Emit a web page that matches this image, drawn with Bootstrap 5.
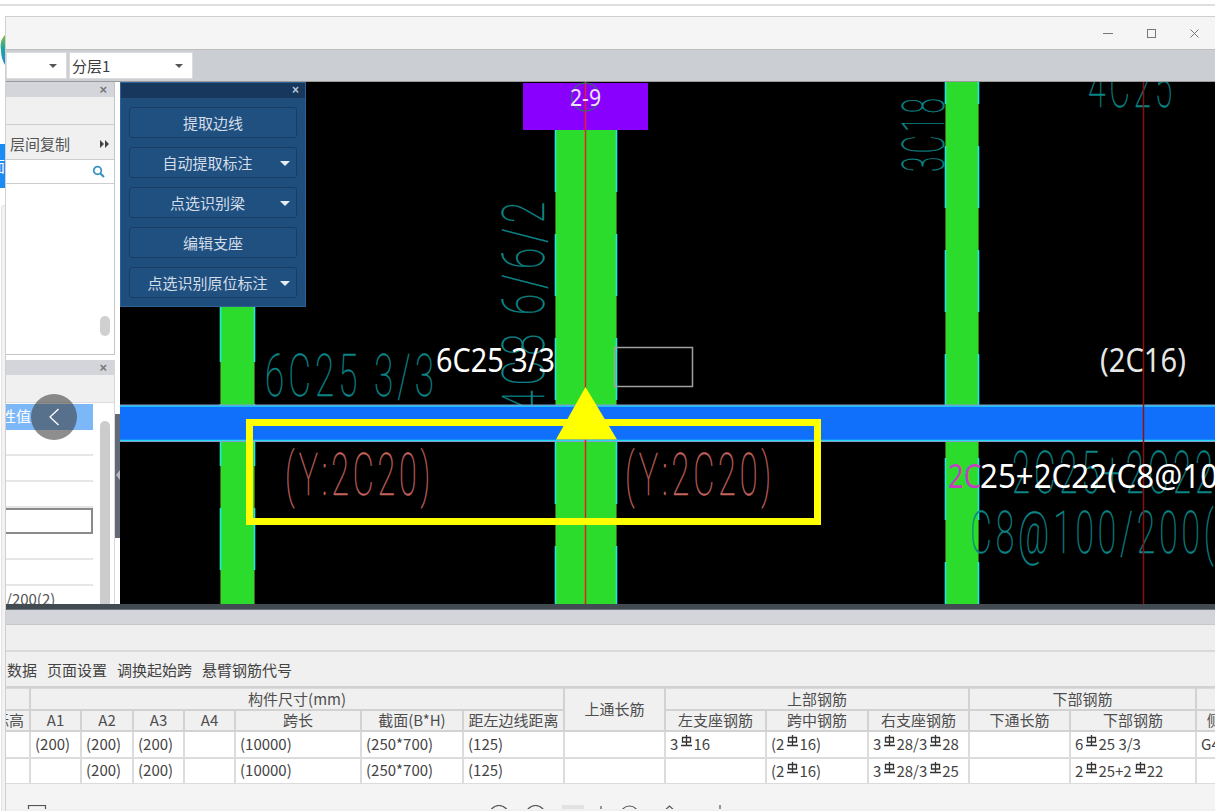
<!DOCTYPE html>
<html lang="zh-CN">
<head>
<meta charset="utf-8">
<title>识别梁</title>
<link href="https://cdn.jsdelivr.net/npm/bootstrap@5.3.0/dist/css/bootstrap.min.css" rel="stylesheet">
<style>
html,body{height:811px;overflow:hidden}
body{background:#fff;margin:0;font-family:"Noto Sans CJK SC","Liberation Sans",sans-serif;font-size:15px;line-height:1.2;color:#4a4a4a;position:relative}
.topgap{height:16px;padding-top:4px}
.topgap i{display:block;height:2px;background:#dedede}
.stage{height:795px}
.edge{width:5px;flex:none;overflow:hidden}
.logo-bit{margin-top:19px;height:30px;width:5px;display:block}
.tab-bit{margin-top:79px;height:44px;background:#1a8cf5;color:#fff;font-size:15px;width:5px;overflow:hidden;line-height:44px;white-space:nowrap;direction:rtl}
.edge-rest{margin:17px 0 0 1px;flex:1;background:#f2f2f2;border-left:1px solid #e4e4e4;border-top:1px solid #e4e4e4;border-top-left-radius:3px}
.appwin{flex:1;min-width:0;border-left:1px solid #d0d0d0;border-top:1px solid #cfcfcf;background:#f0f0f0;overflow:hidden}
.titlebar{height:33px;background:#f5f5f5;border-bottom:1px solid #bdbdbd;padding-right:16px;gap:34px}
.toolbar{height:32px;background:#cbced2;border-bottom:1px solid #9a9a9a;padding:2px 0 2px 0;gap:2px}
.pick{height:27px;background:#fff;border:1px solid #dcdcdc;padding:0 9px 0 2px;color:#3c3c3c;font-size:15px;line-height:25px}
.pick1{width:61px}.pick2{width:124px}
.tri{border-left:4px solid transparent;border-right:4px solid transparent;border-top:4px solid #555;width:0;height:0}
.mainrow{height:522px;background:#fff}
.sidecol{width:109px;flex:none;gap:5px;background:#fff}
.gutter{width:5px;flex:none;background:#fff}
.gutter i{display:block;width:5px;height:124px;margin-top:332px;background:#636a75;position:relative}
.gutter i::after{content:"";position:absolute;left:1px;top:56px;border-top:5px solid transparent;border-bottom:5px solid transparent;border-right:4px solid #b5bac0}
.sidepanel{background:#fff;overflow:hidden;position:relative}
.sp1{height:273px;border-right:1px solid #c4c4c4;border-bottom:1px solid #c4c4c4}
.sp2{flex:1;border-right:1px solid #d8d8d8}
.sp-head{height:15px;background:#d3d5da;color:#777;font-size:13px;line-height:15px;padding-right:7px;text-align:right;font-family:"Liberation Sans",sans-serif;font-weight:700}
.sp-tool{height:28px;background:#f0f0f0;border-bottom:1px solid #cdcdcd}
.sp-copy{height:35px;background:#f0f0f0;border-bottom:1px solid #cdcdcd;padding:3px 4px 0 4px;color:#555}
.sp-search{height:24px;border-bottom:1px solid #cdcdcd;padding-right:9px}
.sp-list{height:170px;position:relative}
.sp-thumb1{position:absolute;right:4px;top:132px;width:10px;height:20px;border-radius:5px;background:#d0d0d0}
.sp-tool2{height:28px;background:#f0f0f0;border-bottom:1px solid #dcdcdc}
.proprow{width:87px;height:26px;border-bottom:2px solid #e6e6e6;line-height:24px;white-space:nowrap;overflow:hidden;color:#555}
.prophi{background:#7cb8f8;color:#fff;border-bottom-color:#7cb8f8;direction:rtl;height:26px;margin-top:1px;padding-right:62px}
.propbox{border:2px solid #8a8a8a;border-left:0;height:26px}
.proplast{padding-top:1px}
.sp-thumb2{position:absolute;right:4px;top:61px;width:10px;height:190px;border-radius:5px;background:#ccc}
.cadwrap{flex:1;min-width:0;background:#000;position:relative;overflow:hidden}
.cadwrap>svg{display:block}
.flt{position:absolute;left:0;top:0;width:186px;height:225px;background:#1f4e7c;border:1px solid #2d6296;z-index:2}
.flt-head{height:15px;background:#17375c;color:#b8c8da;font-size:12px;line-height:15px;text-align:right;padding-right:6px;font-family:"Liberation Sans",sans-serif;font-weight:700}
.flt-body{padding:9px 8px 0 8px;gap:9px}
.btn.fltbtn{height:31px;width:168px;background:#1f5080;border:1px solid #173d65;border-radius:3px;color:#d4dde8;font-size:15px;line-height:1;padding:0;position:relative;box-shadow:none}
.fltbtn.hascaret{padding-right:11px}
.fltbtn.hascaret::after{content:"";position:absolute;right:6px;top:13px;border-left:5px solid transparent;border-right:5px solid transparent;border-top:5px solid #e6edf5}
.backdot{position:absolute;left:31px;top:394px;width:46px;height:46px;border-radius:50%;background:rgba(60,60,60,.58);z-index:5}
.slit{height:6px;background:#424a52;border-bottom:1px solid #6d747b}
.slit2{height:15px;background:#d3d5da;border-bottom:1px solid #c8c8c8}
.band1{height:27px;background:#efefef;border-bottom:2px solid #d9dadc}
.band2{height:36px;background:#f0f0f0;padding:1px 0 0 1px;gap:10px;color:#444;font-size:15px;border-bottom:2px solid #d2d2d2}
.tblwrap{height:96px;overflow:hidden;background:#f4f4f4}
.beamtable{table-layout:fixed;width:1310px;margin:0;--bs-table-bg:transparent;--bs-table-color:#444;border-color:#dadada;font-size:15px;line-height:1.1}
.beamtable>:not(caption)>*>*{padding:0 3px;border-width:0 2px 2px 0;border-color:#dcdcdc;white-space:nowrap;overflow:hidden;vertical-align:middle}
.beamtable thead th{background:#f0f0f0;font-weight:400;text-align:center;color:#4e4e4e;border-color:#d2d2d2}
.beamtable tbody td{background:#fff;padding-left:4px}
.rh1{height:21px}.rh2{height:21px}.rb1{height:27px}.rb2{height:26px}
.rtlclip{direction:rtl;text-align:right!important;padding-right:5px!important}
.steel{width:13px;height:13px;vertical-align:2px;margin:0 0 0 2px}
.foot{height:25px;background:#f4f4f4;overflow:hidden}
.foot svg{display:block;margin-top:21px}
.cad{font-family:Roboto,"Liberation Sans",sans-serif;font-weight:100;font-size:60px;letter-spacing:7px;stroke-width:.4}
.tl{fill:#0b8486;stroke:#0b8486}.rd{fill:#c2625c;stroke:#c2625c}
.lab{font-family:"Noto Sans","Liberation Sans",sans-serif;fill:#fff}
</style>
</head>
<body>
<svg width="0" height="0" class="position-absolute"><defs>
<symbol id="hrb" viewBox="0 0 13 13"><path d="M2.500 2.500h8v4.500h-8zM6.500 0v10.500M1 10.500h11" fill="none" stroke="#333" stroke-width="1.300"/></symbol>
<linearGradient id="logog" x1="0" y1="0" x2="0" y2="1"><stop offset="0" stop-color="#8fbf3a"/><stop offset=".45" stop-color="#1aa5a0"/><stop offset="1" stop-color="#1f8fd0"/></linearGradient>
</defs></svg>
<div class="topgap"><i></i></div>
<div class="stage d-flex">
  <div class="edge d-flex flex-column">
    <svg class="logo-bit" viewBox="0 0 5 30"><path d="M5 0C1 4 0 9 1 15c0 6 1.500 11 4 15z" fill="url(#logog)"/></svg>
    <div class="tab-bit">面</div>
    <div class="edge-rest"></div>
  </div>
  <div class="appwin d-flex flex-column">
    <div class="titlebar d-flex align-items-center justify-content-end">
      <svg width="10" height="9" viewBox="0 0 10 9"><path d="M0 4.500h10" stroke="#777"/></svg>
      <svg width="9" height="9" viewBox="0 0 9 9"><rect x=".5" y=".5" width="8" height="8" fill="none" stroke="#777"/></svg>
      <svg width="9" height="9" viewBox="0 0 9 9"><path d="M.5.500l8 8M8.500.500l-8 8" stroke="#777"/></svg>
    </div>
    <div class="toolbar d-flex">
      <div class="pick pick1 d-flex align-items-center justify-content-end"><span class="tri"></span></div>
      <div class="pick pick2 d-flex align-items-center justify-content-between"><span>分层1</span><span class="tri"></span></div>
    </div>
    <div class="mainrow d-flex">
      <div class="sidecol d-flex flex-column">
        <div class="sidepanel sp1">
          <div class="sp-head">×</div>
          <div class="sp-tool"></div>
          <div class="sp-copy d-flex align-items-center justify-content-between"><span>层间复制</span>
            <svg width="10" height="8" viewBox="0 0 10 8"><path d="M0 0l4 4-4 4zM5 0l4 4-4 4z" fill="#444"/></svg></div>
          <div class="sp-search d-flex align-items-center justify-content-end">
            <svg width="13" height="13" viewBox="0 0 13 13"><circle cx="5.500" cy="5.500" r="3.800" fill="none" stroke="#3b93c4" stroke-width="1.800"/><path d="M8.500 8.500l3.500 3.500" stroke="#3b93c4" stroke-width="2.200"/></svg></div>
          <div class="sp-list"><div class="sp-thumb1"></div></div>
        </div>
        <div class="sidepanel sp2">
          <div class="sp-head">×</div>
          <div class="sp-tool2"></div>
          <div class="proprow prophi">性值</div>
          <div class="proprow"></div>
          <div class="proprow"></div>
          <div class="proprow"></div>
          <div class="proprow propbox"></div>
          <div class="proprow"></div>
          <div class="proprow"></div>
          <div class="proprow proplast">/200(2)</div>
          <div class="sp-thumb2"></div>
        </div>
      </div>
      <div class="gutter"><i></i></div>
      <div class="cadwrap">
        <svg width="1095" height="522" viewBox="120 82 1095 522">
          <g fill="#2bdc2c">
            <rect x="220" y="82" width="35" height="522"/>
            <rect x="555" y="130" width="62" height="474"/>
            <rect x="945" y="82" width="34" height="522"/>
          </g>
          <path d="M220.500 300V604M254.500 300V604M555.500 130V604M616.500 130V604M945.500 82V604M978.500 82V604" stroke="#3f6a12" stroke-width="1" fill="none"/>
          <g stroke-width="1.600" fill="none" stroke-dasharray="62 42">
            <path stroke="#20e6e6" d="M220.500 300V604M254.500 300V604"/>
            <path stroke="#20e6e6" d="M555.500 130V604M616.500 130V604"/>
            <path stroke="#20e6e6" stroke-dashoffset="-64" d="M945.500 82V604M978.500 82V604"/>
          </g>
          <g class="cad tl">
            <text x="265" y="396" textLength="173" lengthAdjust="spacingAndGlyphs">6C25 3/3</text>
            <text transform="translate(544 412) rotate(-90)" textLength="215" lengthAdjust="spacingAndGlyphs">4C8 6/6/2</text>
            <text transform="translate(944 172) rotate(-90)" textLength="77" lengthAdjust="spacingAndGlyphs">3C18</text>
            <text x="1088" y="107" textLength="88" lengthAdjust="spacingAndGlyphs">4C25</text>
            <text x="1012" y="493" textLength="205" lengthAdjust="spacingAndGlyphs">2C25+2C22</text>
            <text x="970" y="553" textLength="270" lengthAdjust="spacingAndGlyphs">C8@100/200(2</text>
          </g>
          <rect x="120" y="405" width="1095" height="36" fill="#1170fb"/>
          <path d="M120 406H1215M120 440.500H1215" stroke="#1fdcf0" stroke-width="1.500"/>
          <path d="M120 405H1215M120 441.500H1215" stroke="#8d9ccc" stroke-width="1"/>
          <path d="M585.500 82V604" stroke="#e8201c" stroke-width="1.500"/>
          <path d="M1143.500 82V604" stroke="#8a1010" stroke-width="1.500"/>
          <rect x="523" y="83" width="125" height="47" fill="#8a00ff"/>
          <path d="M585.500 82V130" stroke="#e8201c" stroke-width="1.500"/>
          <circle cx="585.500" cy="97" r="14" fill="none" stroke="#2a7a5a" stroke-width="1.200"/>
          <text class="lab" x="570" y="106" font-size="24" textLength="31" lengthAdjust="spacingAndGlyphs" opacity=".88">2-9</text>
          <text class="lab" x="436" y="372" font-size="32" textLength="119" lengthAdjust="spacingAndGlyphs">6C25 3/3</text>
          <text class="lab" x="1100" y="372" font-size="32" fill-opacity=".92" textLength="86" lengthAdjust="spacingAndGlyphs">(2C16)</text>
          <text class="lab" x="948" y="488" font-size="32" style="fill:#c83cc4" textLength="33" lengthAdjust="spacingAndGlyphs">2C</text>
          <text class="lab" x="980" y="488" font-size="32" textLength="256" lengthAdjust="spacingAndGlyphs">25+2C22(C8@100</text>
          <rect x="614.500" y="347.500" width="78" height="39" fill="none" stroke="#a0a0a0" stroke-width="1.500"/>
          <g class="cad rd">
            <text x="285" y="495" textLength="149" lengthAdjust="spacingAndGlyphs">(Y:2C20)</text>
            <text x="625" y="495" textLength="150" lengthAdjust="spacingAndGlyphs">(Y:2C20)</text>
          </g>
          <path d="M585.500 387L556 439.500H617z" fill="#ffff00"/>
          <rect x="249.500" y="422.500" width="568" height="99" fill="none" stroke="#ffff00" stroke-width="7"/>
        </svg>
        <div class="flt">
          <div class="flt-head">×</div>
          <div class="flt-body d-flex flex-column">
            <button class="btn fltbtn" type="button">提取边线</button>
            <button class="btn fltbtn hascaret" type="button">自动提取标注</button>
            <button class="btn fltbtn hascaret" type="button">点选识别梁</button>
            <button class="btn fltbtn" type="button">编辑支座</button>
            <button class="btn fltbtn hascaret" type="button">点选识别原位标注</button>
          </div>
        </div>
      </div>
    </div>
    <div class="slit"></div>
    <div class="slit2"></div>
    <div class="band1"></div>
    <div class="band2 d-flex align-items-center"><span>数据</span><span>页面设置</span><span>调换起始跨</span><span>悬臂钢筋代号</span></div>
    <div class="tblwrap">
      <table class="table table-bordered beamtable">
        <colgroup><col style="width:24px"><col style="width:51px"><col style="width:52px"><col style="width:51px"><col style="width:51px"><col style="width:126px"><col style="width:102px"><col style="width:101px"><col style="width:101px"><col style="width:101px"><col style="width:102px"><col style="width:101px"><col style="width:101px"><col style="width:126px"><col style="width:120px"></colgroup>
        <thead>
          <tr class="rh1"><th></th><th colspan="7">构件尺寸(mm)</th><th rowspan="2">上通长筋</th><th colspan="3">上部钢筋</th><th colspan="2">下部钢筋</th><th>侧面钢筋</th></tr>
          <tr class="rh2"><th class="rtlclip">标高</th><th>A1</th><th>A2</th><th>A3</th><th>A4</th><th>跨长</th><th>截面(B*H)</th><th>距左边线距离</th><th>左支座钢筋</th><th>跨中钢筋</th><th>右支座钢筋</th><th>下通长筋</th><th>下部钢筋</th><th class="text-start">&nbsp;&nbsp;侧面通长筋</th></tr>
        </thead>
        <tbody>
          <tr class="rb1"><td></td><td>(200)</td><td>(200)</td><td>(200)</td><td></td><td>(10000)</td><td>(250*700)</td><td>(125)</td><td></td>
            <td>3<svg class="steel"><use href="#hrb"/></svg>16</td><td>(2<svg class="steel"><use href="#hrb"/></svg>16)</td><td>3<svg class="steel"><use href="#hrb"/></svg>28/3<svg class="steel"><use href="#hrb"/></svg>28</td><td></td><td>6<svg class="steel"><use href="#hrb"/></svg>25 3/3</td><td>G4C12</td></tr>
          <tr class="rb2"><td></td><td></td><td>(200)</td><td>(200)</td><td></td><td>(10000)</td><td>(250*700)</td><td>(125)</td><td></td>
            <td></td><td>(2<svg class="steel"><use href="#hrb"/></svg>16)</td><td>3<svg class="steel"><use href="#hrb"/></svg>28/3<svg class="steel"><use href="#hrb"/></svg>25</td><td></td><td>2<svg class="steel"><use href="#hrb"/></svg>25+2<svg class="steel"><use href="#hrb"/></svg>22</td><td></td></tr>
        </tbody>
      </table>
    </div>
    <div class="foot">
      <svg width="1209" height="10" viewBox="6 807 1209 10">
        <g fill="none" stroke="#555" stroke-width="1.200">
          <rect x="28.500" y="807.500" width="17" height="12"/>
          <circle cx="499" cy="817" r="9.500"/><circle cx="535.500" cy="817" r="9.500"/>
          <circle cx="629.500" cy="817" r="9"/>
          <path d="M662 815l7.500-7 7.500 7M601 808v5M720 807v6"/>
        </g>
        <rect x="562" y="807" width="22" height="8" fill="#e2e2e2"/>
      </svg>
    </div>
  </div>
</div>
<div class="backdot d-flex align-items-center justify-content-center">
  <svg width="14" height="20" viewBox="0 0 14 20"><path d="M11.500 2L3 10l8.500 8" fill="none" stroke="#fff" stroke-width="1.300"/></svg>
</div>
<script src="https://cdn.jsdelivr.net/npm/bootstrap@5.3.0/dist/js/bootstrap.bundle.min.js"></script>
</body>
</html>
